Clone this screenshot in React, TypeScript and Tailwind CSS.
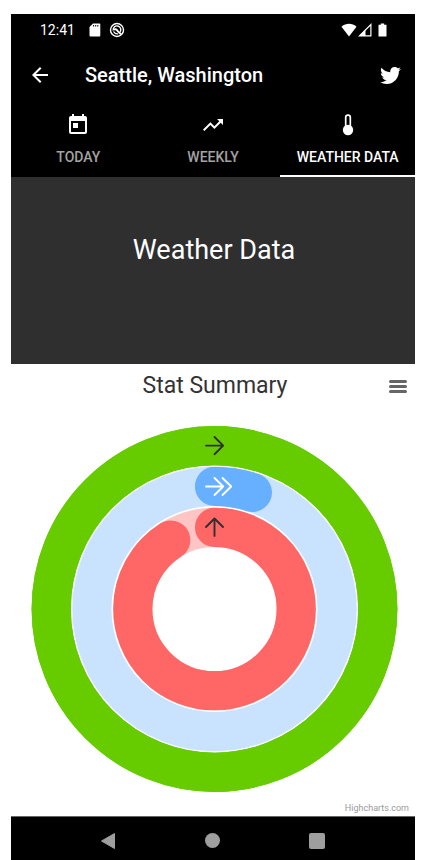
import type { ReactNode } from "react";
import { MdArrowBack, MdToday, MdTrendingUp } from "react-icons/md";
import { FaTwitter } from "react-icons/fa";

function ThermometerIcon() {
  return (
    <svg viewBox="0 0 12 22" className="h-[22px] w-3" aria-hidden="true">
      <path d="M3.700 13V3.400a2.300 2.300 0 0 1 4.600 0V13" fill="none" stroke="currentColor" strokeWidth="1.700" />
      <circle cx="6" cy="16" r="5.200" fill="currentColor" />
    </svg>
  );
}

function StatusBar() {
  return (
    <div className="flex h-8 items-center pl-[29px] pr-7 text-white">
      <span className="w-[35px] text-sm leading-5">12:41</span>
      <svg viewBox="0 0 12 14" className="ml-3.5 h-3.5 w-3" aria-hidden="true">
        <path d="M4 .5h6.300a1 1 0 0 1 1 1v11a1 1 0 0 1-1 1H1.500a1 1 0 0 1-1-1V4z" fill="currentColor" />
        <path d="M4.600 2v1.500M6.700 2v1.500M8.800 2v1.500" stroke="#000" strokeWidth="1" />
      </svg>
      <svg viewBox="0 0 16 16" className="ml-2 size-4" fill="none" stroke="currentColor" aria-hidden="true">
        <circle cx="8" cy="8" r="6.500" strokeWidth="1.400" />
        <path d="M11.200 9.800A3.800 3.800 0 1 0 4.300 8.500" strokeWidth="1.400" />
        <path d="M5 7.500Q7.500 6.500 8.500 9L12 12.300" strokeWidth="1.900" />
        <path d="M4.500 9.500Q6 12.200 9 11.800" strokeWidth="1.300" />
      </svg>
      <svg viewBox="0 0 16 14" className="ml-auto h-3.5 w-4" aria-hidden="true">
        <path d="M.5 3.700C5-.1 11-.1 15.500 3.700L8 13.500z" fill="currentColor" />
      </svg>
      <svg viewBox="0 0 14 14" className="ml-px h-3.5 w-3.5" aria-hidden="true">
        <path d="M1.500 12.900 12.900 1.500v11.400z" fill="none" stroke="currentColor" strokeWidth="1.200" />
        <path d="M1 13 7.500 6.500V13z" fill="currentColor" />
      </svg>
      <svg viewBox="0 0 9 14" className="ml-1.5 h-3.5 w-[9px]" aria-hidden="true">
        <path d="M2.800.5h3.400v1.300h2.300v11.700H.5V1.800h2.300z" fill="currentColor" />
      </svg>
    </div>
  );
}

function Tab({ icon, label, active = false }: { icon: ReactNode; label: string; active?: boolean }) {
  return (
    <button
      role="tab"
      aria-selected={active}
      className={
        "flex flex-1 flex-col items-center gap-[11px] whitespace-nowrap border-b-2 pt-2.5 pb-2 text-sm leading-5 font-medium " +
        (active ? "border-white text-white" : "border-transparent text-[#a3a3a3]")
      }
    >
      <span className="flex h-[22px] items-center text-white">{icon}</span>
      {label}
    </button>
  );
}

const CX = 203.5;
const CY = 200;

function Ring({ radius, track, color, percent }: { radius: number; track: string; color: string; percent: number }) {
  return (
    <g fill="none" strokeWidth="39.2">
      <circle cx={CX} cy={CY} r={radius} stroke={track} />
      <circle
        cx={CX}
        cy={CY}
        r={radius}
        stroke={color}
        strokeLinecap="round"
        pathLength={100}
        strokeDasharray={percent + " 200"}
        transform={`rotate(-90 ${CX} ${CY})`}
      />
    </g>
  );
}

function ActivityChart() {
  return (
    <svg viewBox="0 0 404 391" className="w-full" role="img" aria-label="Stat Summary chart">
      <Ring radius={163.3} track="#66cc00" color="#66cc00" percent={100} />
      <Ring radius={122.6} track="#c9e3ff" color="#66b0ff" percent={5} />
      <Ring radius={81.7} track="#ffc5c5" color="#ff6666" percent={91} />
      <g fill="none" strokeWidth="1.9" strokeLinecap="round" strokeLinejoin="round">
        <path d="M195 36.600h17.200M203.500 28l8.700 8.600-8.700 8.600" stroke="#303030" />
        <path d="M195 77.500h17.200M203.500 69l8.700 8.500-8.700 8.500M211.500 69l8.700 8.500-8.700 8.500" stroke="#fff" />
        <path d="M203.500 126.900v-17.200M195 118l8.500-8.500L212 118" stroke="#303030" />
      </g>
    </svg>
  );
}

export default function App() {
  return (
    <div className="min-h-screen bg-white pt-3.5 pr-[13px] pl-[11px] font-['Roboto',sans-serif]">
      <header className="bg-black">
        <StatusBar />
        <div className="flex h-[58px] items-center pr-3.5 pl-[17px] text-white">
          <button aria-label="Back">
            <MdArrowBack className="size-6" />
          </button>
          <h1 className="ml-[33px] text-xl leading-7 font-medium">Seattle, Washington</h1>
          <button aria-label="Twitter" className="ml-auto">
            <FaTwitter className="size-[21px]" />
          </button>
        </div>
        <div role="tablist" className="flex">
          <Tab icon={<MdToday className="size-6" />} label="TODAY" />
          <Tab icon={<MdTrendingUp className="size-6" />} label="WEEKLY" />
          <Tab icon={<ThermometerIcon />} label="WEATHER DATA" active />
        </div>
      </header>
      <main>
        <section className="bg-[#2f2f2f] pt-14 pb-[97px] text-center text-white">
          <h2 className="pl-0.5 text-[27px] leading-[34px]">Weather Data</h2>
        </section>
        <section>
          <div className="relative pt-2">
            <h3 className="pl-1 text-center text-[23px] leading-7 text-[#333333]">Stat Summary</h3>
            <button aria-label="Chart menu" className="absolute top-4 right-2 flex w-[18px] flex-col gap-0.5">
              <span className="h-[3px] w-full rounded-full bg-[#666666]" />
              <span className="h-[3px] w-full rounded-full bg-[#666666]" />
              <span className="h-[3px] w-full rounded-full bg-[#666666]" />
            </button>
          </div>
          <div className="pt-[9px]">
            <ActivityChart />
          </div>
          <div className="flex justify-end pt-px pr-1.5 pb-px">
            <a href="#" className="text-[9px] leading-[14px] text-[#999999]">Highcharts.com</a>
          </div>
        </section>
      </main>
      <nav className="flex h-11 items-center justify-between border-t border-[#666666] bg-black pt-1 pr-[90px] pl-[89px] text-[#9e9e9e]">
        <button aria-label="Back">
          <svg viewBox="0 0 16 18" className="h-[18px] w-4" aria-hidden="true">
            <path d="M14.500 1.500v15L1.500 9z" fill="currentColor" stroke="currentColor" strokeLinejoin="round" />
          </svg>
        </button>
        <button aria-label="Home" className="size-[15px] rounded-full bg-current" />
        <button aria-label="Recent apps" className="size-4 rounded-xs bg-current" />
      </nav>
    </div>
  );
}
